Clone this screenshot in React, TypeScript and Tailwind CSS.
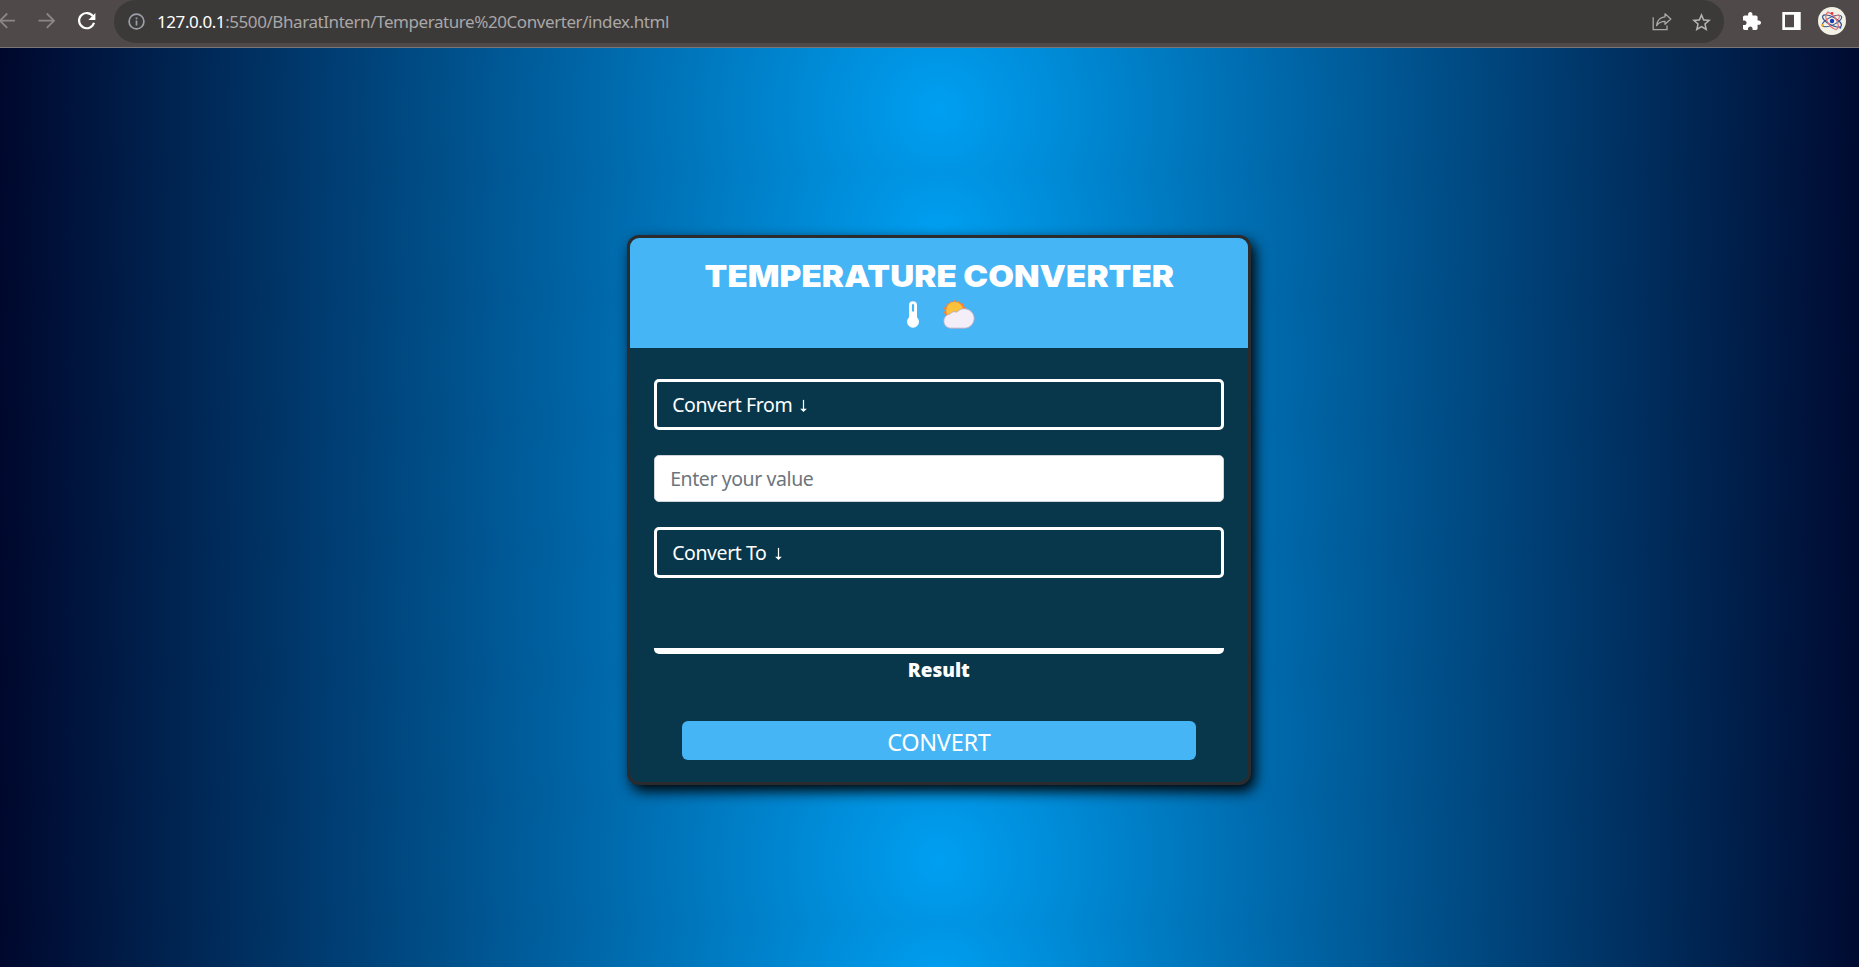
import React from "react";

function NavIcons() {
  return (
    <svg className="h-[42px] w-[114px] shrink-0" viewBox="0 0 114 42" fill="none" strokeWidth="1.8">
      <path d="M15 20.7H0M7.2 13.5L0 20.7L7.2 27.9" stroke="#8b8787" />
      <path d="M38.5 20.7H54M46.8 13.5L54 20.7L46.8 27.9" stroke="#8b8787" />
      <path d="M92.9 16.2A7.6 7.6 0 1 0 94 22.8" stroke="#fff" strokeWidth="2.2" />
      <path d="M95.4 13V20H88.4Z" fill="#fff" />
    </svg>
  );
}

function InfoIcon() {
  return (
    <svg width="17" height="17" viewBox="0 0 17 17" fill="none" stroke="#9aa0a6" strokeWidth="1.7">
      <circle cx="8.5" cy="8.5" r="7.4" />
      <path d="M8.5 7.6V12.5M8.5 4.5V6.3" />
    </svg>
  );
}

function ShareIcon() {
  return (
    <svg width="20" height="20" viewBox="0 0 20 20" fill="none" stroke="#a9a7a7" strokeWidth="1.3">
      <path d="M1.2 5.2V17.6H15V13.5" />
      <path
        d="M13 1.8L18.8 7L13 12.2V9.3C9.6 9.3 6.8 10.3 4.6 13.6C5.2 8.8 8 5.3 13 4.9Z"
        strokeLinejoin="round"
      />
    </svg>
  );
}

function StarIcon() {
  return (
    <svg width="19" height="18" viewBox="2 2 20 19" fill="#b5b3b3">
      <path d="M22 9.24l-7.19-.62L12 2 9.19 8.63 2 9.24l5.46 4.73L5.82 21 12 17.27 18.18 21l-1.63-7.03L22 9.24zM12 15.4l-3.76 2.27 1-4.28-3.32-2.88 4.38-.38L12 6.1l1.71 4.04 4.38.38-3.32 2.88 1 4.28L12 15.4z" />
    </svg>
  );
}

function PuzzleIcon() {
  return (
    <svg width="18" height="18" viewBox="2 1 21 21" fill="#fff">
      <path d="M20.5 11H19V7c0-1.1-.9-2-2-2h-4V3.5C13 2.12 11.88 1 10.5 1S8 2.12 8 3.5V5H4c-1.1 0-1.99.9-1.99 2v3.8H3.5c1.49 0 2.7 1.21 2.7 2.7s-1.21 2.7-2.7 2.7H2V20c0 1.1.9 2 2 2h3.8v-1.5c0-1.49 1.21-2.7 2.7-2.7 1.49 0 2.7 1.21 2.7 2.7V22H17c1.1 0 2-.9 2-2v-4h1.5c1.38 0 2.5-1.12 2.5-2.5S21.88 11 20.5 11z" />
    </svg>
  );
}

function SidePanelIcon() {
  return (
    <svg width="19" height="18" viewBox="0 0 19 18">
      <path fill="#fff" fillRule="evenodd" d="M0.3 0H18.7V18H0.3ZM3 2.7V15.3H12V2.7Z" />
    </svg>
  );
}

function Avatar() {
  return (
    <svg width="28" height="28" viewBox="0 0 28 28" fill="none">
      <circle cx="14" cy="14" r="14" fill="#f3f0e6" />
      <ellipse cx="14" cy="14" rx="10.5" ry="4" stroke="#35598f" strokeWidth="1.2" transform="rotate(28 14 14)" />
      <ellipse cx="14" cy="14" rx="10.5" ry="4" stroke="#35598f" strokeWidth="1.1" transform="rotate(-25 14 14)" />
      <ellipse cx="14" cy="14" rx="9.5" ry="4.4" stroke="#e8686c" strokeWidth="1.2" transform="rotate(58 14 14)" />
      <path d="M18.5 9C21 6.5 22.5 8.5 20.5 12.5" stroke="#e8777a" strokeWidth="1.1" />
      <circle cx="14" cy="14" r="2.2" fill="#1a3fb4" />
      <circle cx="14" cy="6.3" r="1.3" fill="#e5322f" />
      <circle cx="4.6" cy="18.4" r="1.3" fill="#f2a91f" />
      <circle cx="22.3" cy="20.8" r="1" fill="#2f5fb0" />
      <circle cx="10" cy="4.5" r="0.7" fill="#86b4e0" />
      <circle cx="18" cy="22.8" r="0.7" fill="#86b4e0" />
    </svg>
  );
}

function Toolbar() {
  return (
    <header className="flex h-12 shrink-0 items-start border-b border-[#7b7675] bg-[#4f4a49]">
      <NavIcons />
      <div className="flex h-[43px] w-[1610px] shrink-0 items-center rounded-r-[22px] rounded-l-[22px] bg-[#3c3939] pr-[13px] pl-[14px]">
        <InfoIcon />
        <span className="ml-[12px] text-[17px] tracking-[-0.43px] whitespace-pre text-[#a9a7a7]">
          <span className="text-white">127.0.0.1</span>:5500/BharatIntern/Temperature%20Converter/index.html
        </span>
        <div className="ml-auto flex items-center gap-[20px] pt-px">
          <ShareIcon />
          <StarIcon />
        </div>
      </div>
      <div className="flex h-[42px] items-center pl-[19px]">
        <PuzzleIcon />
        <div className="ml-[21px] flex">
          <SidePanelIcon />
        </div>
        <div className="ml-[17px] flex">
          <Avatar />
        </div>
      </div>
    </header>
  );
}

function ThermometerIcon() {
  return (
    <svg width="12" height="27" viewBox="0 0 12 27">
      <path
        fill="#fff"
        fillRule="evenodd"
        d="M2 4.2A4 4 0 0 1 10 4.2V16.2A6 6 0 1 1 2 16.2ZM4.9 3.6V10.5H7.1V3.6Q6 2.4 4.9 3.6Z"
      />
    </svg>
  );
}

function SunCloudIcon() {
  return (
    <svg width="32" height="29" viewBox="0 0 32 29">
      <path
        fill="#ff822d"
        d="M11.5 0L13.6 2.2L16.4 1L17.6 3.6L20.6 3.6L20.7 6.6L23.3 8L22 11L10 20L2.2 16.2L3.2 14.2L.6 13L2 10.4L.8 7.8L3.6 6.6L3.7 3.6L6.6 3.6L8 1.2L10 2.2Z"
      />
      <circle cx="11.6" cy="10.4" r="8.4" fill="#fcc23c" />
      <path
        fill="#f3eef8"
        stroke="#b9aac3"
        strokeWidth="0.9"
        d="M8 28.2C3.8 28.2.8 25 .8 21.2C.8 17.4 3.6 14.3 7.2 14C8.4 11.8 11.4 11 14 12.2C15.7 9.9 18.3 8.7 21 8.7C26.6 8.7 31.2 12.9 31.2 18.3C31.2 23.8 26.8 28.2 21.4 28.2Z"
      />
    </svg>
  );
}

function Picker({ label }: { label: string }) {
  return (
    <button className="flex h-[51px] w-full items-center rounded-[5px] border-[3px] border-white pl-[15px] text-left text-[19.5px] text-white">
      <span className="tracking-[-0.42px]">{label}</span>
      <svg className="mt-[3px] ml-[8px]" width="7" height="14" viewBox="0 0 8 14" fill="none">
        <path d="M4 0V12" stroke="#fff" strokeWidth="1.4" />
        <path d="M0.2 10H7.8L4 13.8Z" fill="#fff" />
      </svg>
    </button>
  );
}

function ConverterCard() {
  return (
    <section className="flex h-[550px] w-[624.5px] flex-col overflow-hidden rounded-[12px] border-[3px] border-[#2b2b2d] bg-[#08374b] shadow-[4px_6px_14px_#000]">
      <div className="flex h-[110px] shrink-0 flex-col items-center bg-[#45b5f6] pt-[18px]">
        <h1 className="scale-x-[1.09] font-['Inter',sans-serif] text-[30.5px] leading-[40px] font-black whitespace-nowrap text-white">
          TEMPERATURE CONVERTER
        </h1>
        <div className="mt-1 flex items-center gap-[24px] pl-[5px]">
          <ThermometerIcon />
          <SunCloudIcon />
        </div>
      </div>
      <div className="flex flex-col px-[24.6px] pt-[31px]">
        <Picker label="Convert From" />
        <input
          placeholder="Enter your value"
          className="mt-[25px] h-[47px] w-full rounded-[5px] border border-[#ced4da] bg-white px-[15px] text-[19.5px] tracking-[-0.42px] placeholder:text-[#6c757d]"
        />
        <div className="mt-[25px]">
          <Picker label="Convert To" />
        </div>
        <div className="mt-[70px] h-[6px] rounded-b-[5px] bg-white" />
        <p className="text-center text-[19px] leading-[33px] font-black text-white">Result</p>
        <button className="mx-auto mt-[34px] h-[39px] w-[513.4px] rounded-[6px] bg-[#45b5f6] pt-[2px] text-[23.5px] leading-[39px] tracking-[-0.3px] text-white">
          CONVERT
        </button>
      </div>
    </section>
  );
}

export default function App() {
  return (
    <div className="flex h-[967px] w-[1859px] flex-col overflow-hidden font-['Noto_Sans',sans-serif]">
      <Toolbar />
      <main className="flex-1 bg-[radial-gradient(circle,#009ff1_0%,#000428_100%)] bg-[length:1920px_125px] bg-[position:-21px_0px] pt-[187px] pl-[626.6px]">
        <ConverterCard />
      </main>
    </div>
  );
}
